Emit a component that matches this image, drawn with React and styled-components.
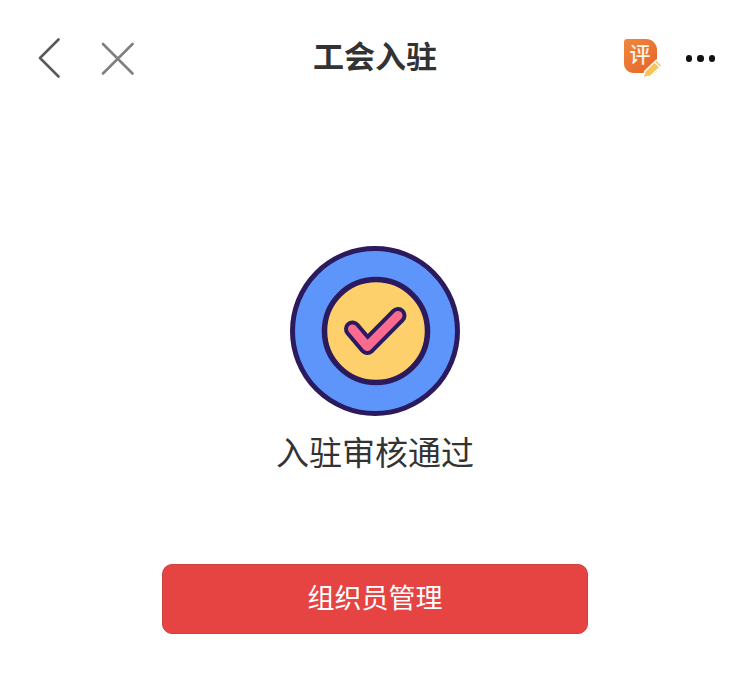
import React from "react";
import styled, { createGlobalStyle } from "styled-components";

const Global = createGlobalStyle`
  html, body { margin: 0; padding: 0; background: #fff; }
  body { font-family: "Liberation Sans", "Noto Sans CJK SC", sans-serif; }
`;

const Page = styled.div`
  width: 750px;
  height: 694px;
  display: flex;
  flex-direction: column;
  align-items: center;
  overflow: hidden;
  background: #fff;
`;

const Header = styled.header`
  width: 100%;
  box-sizing: border-box;
  height: 116px;
  display: grid;
  grid-template-columns: 1fr auto 1fr;
  align-items: center;
  padding: 0 35px 0 38px;
`;

const Side = styled.div`
  display: flex;
  align-items: center;
  justify-content: ${(p) => (p.$end ? "flex-end" : "flex-start")};
  gap: ${(p) => p.$gap}px;
`;

const Title = styled.h1`
  margin: 0 0 0 -3px;
  font-size: 31px;
  line-height: 40px;
  font-weight: 700;
  color: #333;
`;

const IconSvg = styled.svg`
  display: block;
  flex: none;
`;

const Badge = styled.div`
  position: relative;
  width: 40px;
  height: 40px;
  flex: none;
  margin-top: 2px;
`;

const BadgeTile = styled.div`
  width: 33px;
  height: 34px;
  border-radius: 3px 11px 4px 9px;
  background: linear-gradient(135deg, #f0883a, #e5622d);
  color: #fdf3e6;
  font-size: 21px;
  line-height: 31px;
  font-weight: 500;
  text-align: center;
`;

const Pencil = styled.svg`
  position: absolute;
  left: 17px;
  top: 19px;
`;

const Dots = styled.div`
  display: flex;
  gap: 5px;
  margin-top: 1px;
`;

const Dot = styled.span`
  width: 6.500px;
  height: 6.500px;
  border-radius: 50%;
  background: #111;
`;

const Medal = styled.svg`
  display: block;
  margin-top: 129px;
`;

const Status = styled.div`
  margin-top: 15px;
  font-size: 33px;
  line-height: 44px;
  color: #333;
  text-align: center;
`;

const ActionButton = styled.button`
  margin-top: 88px;
  width: 426px;
  height: 70px;
  box-sizing: border-box;
  border: 1px solid #c8453f;
  border-radius: 10px;
  background: #e64343;
  color: #fff;
  font-family: inherit;
  font-size: 27px;
  padding: 0 0 6px;
`;

export default function App() {
  return (
    <Page>
      <Global />
      <Header>
        <Side $gap={41}>
          <IconSvg width="22" height="40" viewBox="0 0 22 40">
            <path d="M20.500 1.500 L2 20 L20.500 38.500" fill="none" stroke="#5a5a5a" strokeWidth="2.600" strokeLinecap="round" strokeLinejoin="round" />
          </IconSvg>
          <IconSvg width="33" height="33" viewBox="0 0 33 33">
            <path d="M2 2 L31.500 31.500 M31.500 2 L2 31.500" fill="none" stroke="#808080" strokeWidth="2.600" strokeLinecap="round" />
          </IconSvg>
        </Side>
        <Title>工会入驻</Title>
        <Side $end $gap={22}>
          <Badge>
            <BadgeTile>评</BadgeTile>
            <Pencil width="23" height="21" viewBox="0 0 23 21">
              <path d="M2 19.500 L4 13 L15.500 2 L21 7.500 L9 18.500 Z" fill="#f5c65a" stroke="#fff" strokeWidth="1.500" strokeLinejoin="round" />
              <path d="M13.500 4 L19 9.500" stroke="#fff" strokeWidth="1.200" />
            </Pencil>
          </Badge>
          <Dots>
            <Dot />
            <Dot />
            <Dot />
          </Dots>
        </Side>
      </Header>
      <Medal width="172" height="172" viewBox="0 0 172 172">
        <circle cx="86" cy="86" r="82.500" fill="#5d95fb" stroke="#2c1a5e" strokeWidth="5" />
        <circle cx="87" cy="86" r="51.500" fill="#fdd06b" stroke="#2c1a5e" strokeWidth="5.500" />
        <path d="M63.500 84 L78.300 101.500 L109 70.500" fill="none" stroke="#2c1a5e" strokeWidth="17" strokeLinecap="round" strokeLinejoin="round" />
        <path d="M63.500 84 L78.300 101.500 L109 70.500" fill="none" stroke="#fb6b8f" strokeWidth="9" strokeLinecap="round" strokeLinejoin="round" />
      </Medal>
      <Status>入驻审核通过</Status>
      <ActionButton>组织员管理</ActionButton>
    </Page>
  );
}
